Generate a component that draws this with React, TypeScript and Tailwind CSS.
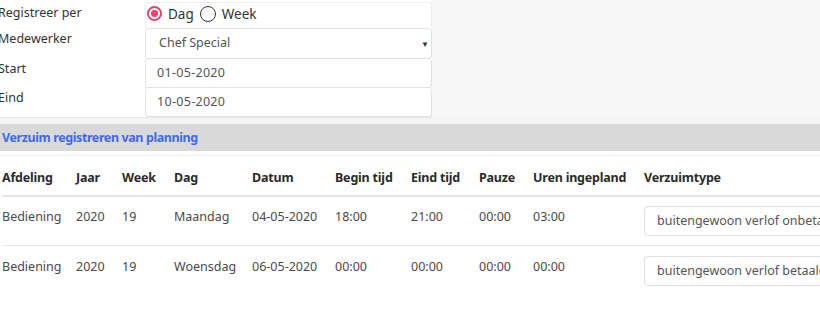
import React from "react";

const cols = [74, 46, 52, 78, 83, 76, 68, 54, 111];

function Radio({ checked }: { checked: boolean }) {
  return checked ? (
    <span className="w-[15px] h-[15px] rounded-full border-2 border-[#f0406f] bg-white flex items-center justify-center">
      <span className="w-[7px] h-[7px] rounded-full bg-[#f0406f]" />
    </span>
  ) : (
    <span className="w-[16px] h-[16px] rounded-full border-[1.5px] border-[#333] bg-white" />
  );
}

function Row({ cells, select, pt, border }: { cells: string[]; select: string; pt: string; border: boolean }) {
  return (
    <div className={`flex h-[49px] ${border ? "border-b border-[#e4e7ea]" : ""} ${pt}`}>
      {cells.map((c, i) => (
        <div key={i} style={{ width: cols[i] }} className="shrink-0 leading-[20px] text-[#4a4a4a]">
          {c}
        </div>
      ))}
      <div className="flex-1 -mt-[1px]">
        <div className="h-[30px] w-[200px] border border-[#dcdfe3] rounded-[4px] flex items-center pl-[12px] text-[#555] whitespace-nowrap overflow-hidden">
          {select}
        </div>
      </div>
    </div>
  );
}

export default function App() {
  return (
    <div
      className="w-[820px] h-[312px] overflow-hidden bg-white text-[12.5px] text-[#333]"
      style={{ fontFamily: '"Noto Sans", "Open Sans", sans-serif' }}
    >
      <div className="flex bg-[#f7f7f7]">
        <div className="w-[432px] bg-white border-b border-[#e6e6e6] pt-[2px]">
          <div className="flex h-[26px]">
            <div className="w-[147px] -ml-[2px] leading-[22px]">Registreer per</div>
            <div className="w-[287px] border border-b-0 border-[#ececec] rounded-t-[3px] flex items-start pt-[3px] pl-[1px] gap-[6px]">
              <Radio checked />
              <span className="text-[13.5px] leading-[16px]">Dag</span>
              <Radio checked={false} />
              <span className="text-[13.5px] leading-[16px]">Week</span>
            </div>
          </div>
          <div className="flex h-[31px]">
            <div className="w-[147px] -ml-[2px] leading-[20px] pt-[1px]">Medewerker</div>
            <div className="w-[287px] border border-[#dfe2e6] rounded-[3px] flex items-center pl-[13px] pr-[2px] text-[#555]">
              <span className="flex-1">Chef Special</span>
              <span className="text-[8px] text-[#333]">▼</span>
            </div>
          </div>
          <div className="flex h-[29px]">
            <div className="w-[147px] -ml-[2px] leading-[20px]">Start</div>
            <div className="w-[287px] border border-t-0 border-[#dfe2e6] rounded-[3px] flex items-center pl-[11px] pt-[1px] text-[#555] tracking-[0.3px]">
              01-05-2020
            </div>
          </div>
          <div className="flex h-[29px]">
            <div className="w-[147px] -ml-[2px] leading-[20px]">Eind</div>
            <div className="w-[287px] border border-t-0 border-[#dfe2e6] rounded-[3px] flex items-center pl-[11px] pt-[1px] text-[#555] tracking-[0.3px]">
              10-05-2020
            </div>
          </div>
        </div>
        <div className="flex-1" />
      </div>
      <div className="h-[6px] bg-[#f5f5f5]" />
      <div className="h-[27px] bg-[#d9d9d9] flex items-center pl-[2px] pt-[1px] font-bold text-[#4169f0] tracking-[-0.4px]">
        Verzuim registreren van planning
      </div>
      <div className="h-[4px] bg-white" />
      <div className="pl-[2px] border-t border-[#e9ecef]">
        <div className="flex h-[41px] pt-[12px] leading-[20px] font-bold text-[#2b2b2b] border-b-2 border-[#e4e7ea] tracking-[-0.2px]">
          {["Afdeling", "Jaar", "Week", "Dag", "Datum", "Begin tijd", "Eind tijd", "Pauze", "Uren ingepland"].map((h, i) => (
            <div key={i} style={{ width: cols[i] }} className="shrink-0">
              {h}
            </div>
          ))}
          <div className="flex-1">Verzuimtype</div>
        </div>
        <Row
          pt="pt-[10px]"
          border
          cells={["Bediening", "2020", "19", "Maandag", "04-05-2020", "18:00", "21:00", "00:00", "03:00"]}
          select="buitengewoon verlof onbetaald"
        />
        <Row
          pt="pt-[11px]"
          border={false}
          cells={["Bediening", "2020", "19", "Woensdag", "06-05-2020", "00:00", "00:00", "00:00", "00:00"]}
          select="buitengewoon verlof betaald"
        />
      </div>
    </div>
  );
}
